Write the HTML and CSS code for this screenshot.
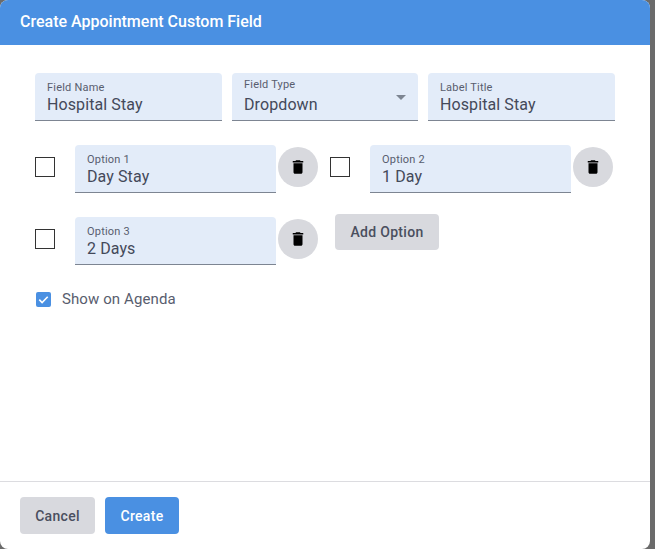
FILE: index.html
```html
<!DOCTYPE html>
<html lang="en">
<head>
<meta charset="utf-8">
<title>Create Appointment Custom Field</title>
<link rel="stylesheet" href="styles.css">
</head>
<body>
<div class="modal">
  <header class="modal-header">Create Appointment Custom Field</header>
  <main class="modal-body">
    <div class="top-row">
      <div class="field"><span class="field-label">Field Name</span><span class="field-value">Hospital Stay</span></div>
      <div class="field field-select"><span class="field-label">Field Type</span><span class="field-value">Dropdown</span><span class="caret"></span></div>
      <div class="field"><span class="field-label">Label Title</span><span class="field-value">Hospital Stay</span></div>
    </div>
    <div class="options">
      <div class="option">
        <span class="box"></span>
        <div class="field"><span class="field-label">Option 1</span><span class="field-value">Day Stay</span></div>
        <button class="trash" type="button" aria-label="Delete"><svg viewBox="0 0 24 24" width="18" height="18"><path d="M6 19c0 1.1.9 2 2 2h8c1.100 0 2-.9 2-2V7H6v12zM19 4h-3.500l-1-1h-5l-1 1H5v2h14V4z"/></svg></button>
      </div>
      <div class="option">
        <span class="box"></span>
        <div class="field"><span class="field-label">Option 2</span><span class="field-value">1 Day</span></div>
        <button class="trash" type="button" aria-label="Delete"><svg viewBox="0 0 24 24" width="18" height="18"><path d="M6 19c0 1.1.9 2 2 2h8c1.100 0 2-.9 2-2V7H6v12zM19 4h-3.500l-1-1h-5l-1 1H5v2h14V4z"/></svg></button>
      </div>
      <div class="option">
        <span class="box"></span>
        <div class="field"><span class="field-label">Option 3</span><span class="field-value">2 Days</span></div>
        <button class="trash" type="button" aria-label="Delete"><svg viewBox="0 0 24 24" width="18" height="18"><path d="M6 19c0 1.1.9 2 2 2h8c1.100 0 2-.9 2-2V7H6v12zM19 4h-3.500l-1-1h-5l-1 1H5v2h14V4z"/></svg></button>
      </div>
      <div class="add-cell"><button class="btn btn-grey" type="button">Add Option</button></div>
    </div>
    <label class="agenda">
      <span class="checked"><svg viewBox="0 0 16 16" width="15" height="15"><path d="M3.500 8.200l3 3 6-6.200" fill="none" stroke="#fff" stroke-width="1.700"/></svg></span>
      <span class="agenda-text">Show on Agenda</span>
    </label>
  </main>
  <footer class="modal-footer">
    <button class="btn btn-grey btn-footer" type="button">Cancel</button>
    <button class="btn btn-blue btn-footer" type="button">Create</button>
  </footer>
</div>
</body>
</html>
```
FILE: styles.css
```css
* { box-sizing: border-box; }
html, body { height: 100%; }
body {
  margin: 0;
  height: 549px;
  overflow: hidden;
  background: #6b6b6b;
  font-family: Roboto, "Liberation Sans", sans-serif;
}
.modal {
  width: 650px;
  height: 549px;
  display: flex;
  flex-direction: column;
  background: #fff;
  border-radius: 8px;
  overflow: hidden;
}
.modal-header {
  height: 45px;
  flex: none;
  padding: 0 20px;
  display: flex;
  align-items: center;
  background: #4a90e2;
  color: #fff;
  font-size: 16px;
  font-weight: 500;
  padding-bottom: 2px;
}
.modal-body {
  flex: 1;
  padding: 28px 35px 0;
}
.top-row {
  display: grid;
  grid-template-columns: 187px 186px 187px;
  gap: 10px;
}
.field {
  position: relative;
  height: 48px;
  background: #e3ecf9;
  border-bottom: 1px solid #7d8592;
  border-radius: 4px 4px 0 0;
  padding: 8px 12px 0;
  display: flex;
  flex-direction: column;
  color: #4a4f5e;
}
.field-label {
  font-size: 11px;
  line-height: 13px;
  letter-spacing: 0.2px;
  color: #585d6e;
}
.field-value {
  font-size: 16px;
  line-height: 20px;
  margin-top: 1px;
  letter-spacing: 0.1px;
  color: #44495a;
}
.field-select { padding-top: 5px; }
.field-select .field-value { margin-top: 4px; }
.caret {
  position: absolute;
  right: 12px;
  top: 22px;
  width: 0;
  height: 0;
  border-left: 5px solid transparent;
  border-right: 5px solid transparent;
  border-top: 5px solid #7d8592;
}
.options {
  display: grid;
  grid-template-columns: 295px 285px;
  row-gap: 24px;
  margin-top: 24px;
}
.option {
  display: flex;
  align-items: flex-start;
}
.box {
  flex: none;
  width: 20px;
  height: 20px;
  margin-top: 12px;
  margin-right: 20px;
  border: 1px solid #333;
  background: #fff;
}
.option .field { width: 201px; flex: none; }
.trash {
  flex: none;
  width: 40px;
  height: 40px;
  margin: 2px 0 0 2px;
  padding: 0;
  border: 0;
  border-radius: 50%;
  background: #d8d9de;
  display: flex;
  align-items: center;
  justify-content: center;
}
.add-cell { padding: 0 0 0 5px; margin-top: -3px; }
.btn {
  border: 0;
  border-radius: 4px;
  font-family: inherit;
  font-size: 14px;
  font-weight: 500;
  letter-spacing: 0.3px;
  padding: 0;
}
.btn-grey { background: #d8d9de; color: #4a4f5e; }
.btn-blue { background: #4a90e2; color: #fff; }
.add-cell .btn { width: 104px; height: 36px; }
.agenda {
  display: flex;
  align-items: center;
  margin-top: 24px;
  margin-left: 1px;
  height: 20px;
}
.checked {
  width: 15px;
  height: 15px;
  border-radius: 2px;
  background: #4a90e2;
  display: flex;
  margin-right: 11px;
}
.agenda-text {
  font-size: 15px;
  letter-spacing: 0.1px;
  color: #585d6e;
}
.modal-footer {
  flex: none;
  height: 68px;
  border-top: 1px solid #dcdce0;
  padding: 15px 20px 0;
  display: flex;
  gap: 10px;
  align-items: flex-start;
}
.btn-footer { height: 37px; width: 75px; }
.btn-blue.btn-footer { width: 74px; }
```
